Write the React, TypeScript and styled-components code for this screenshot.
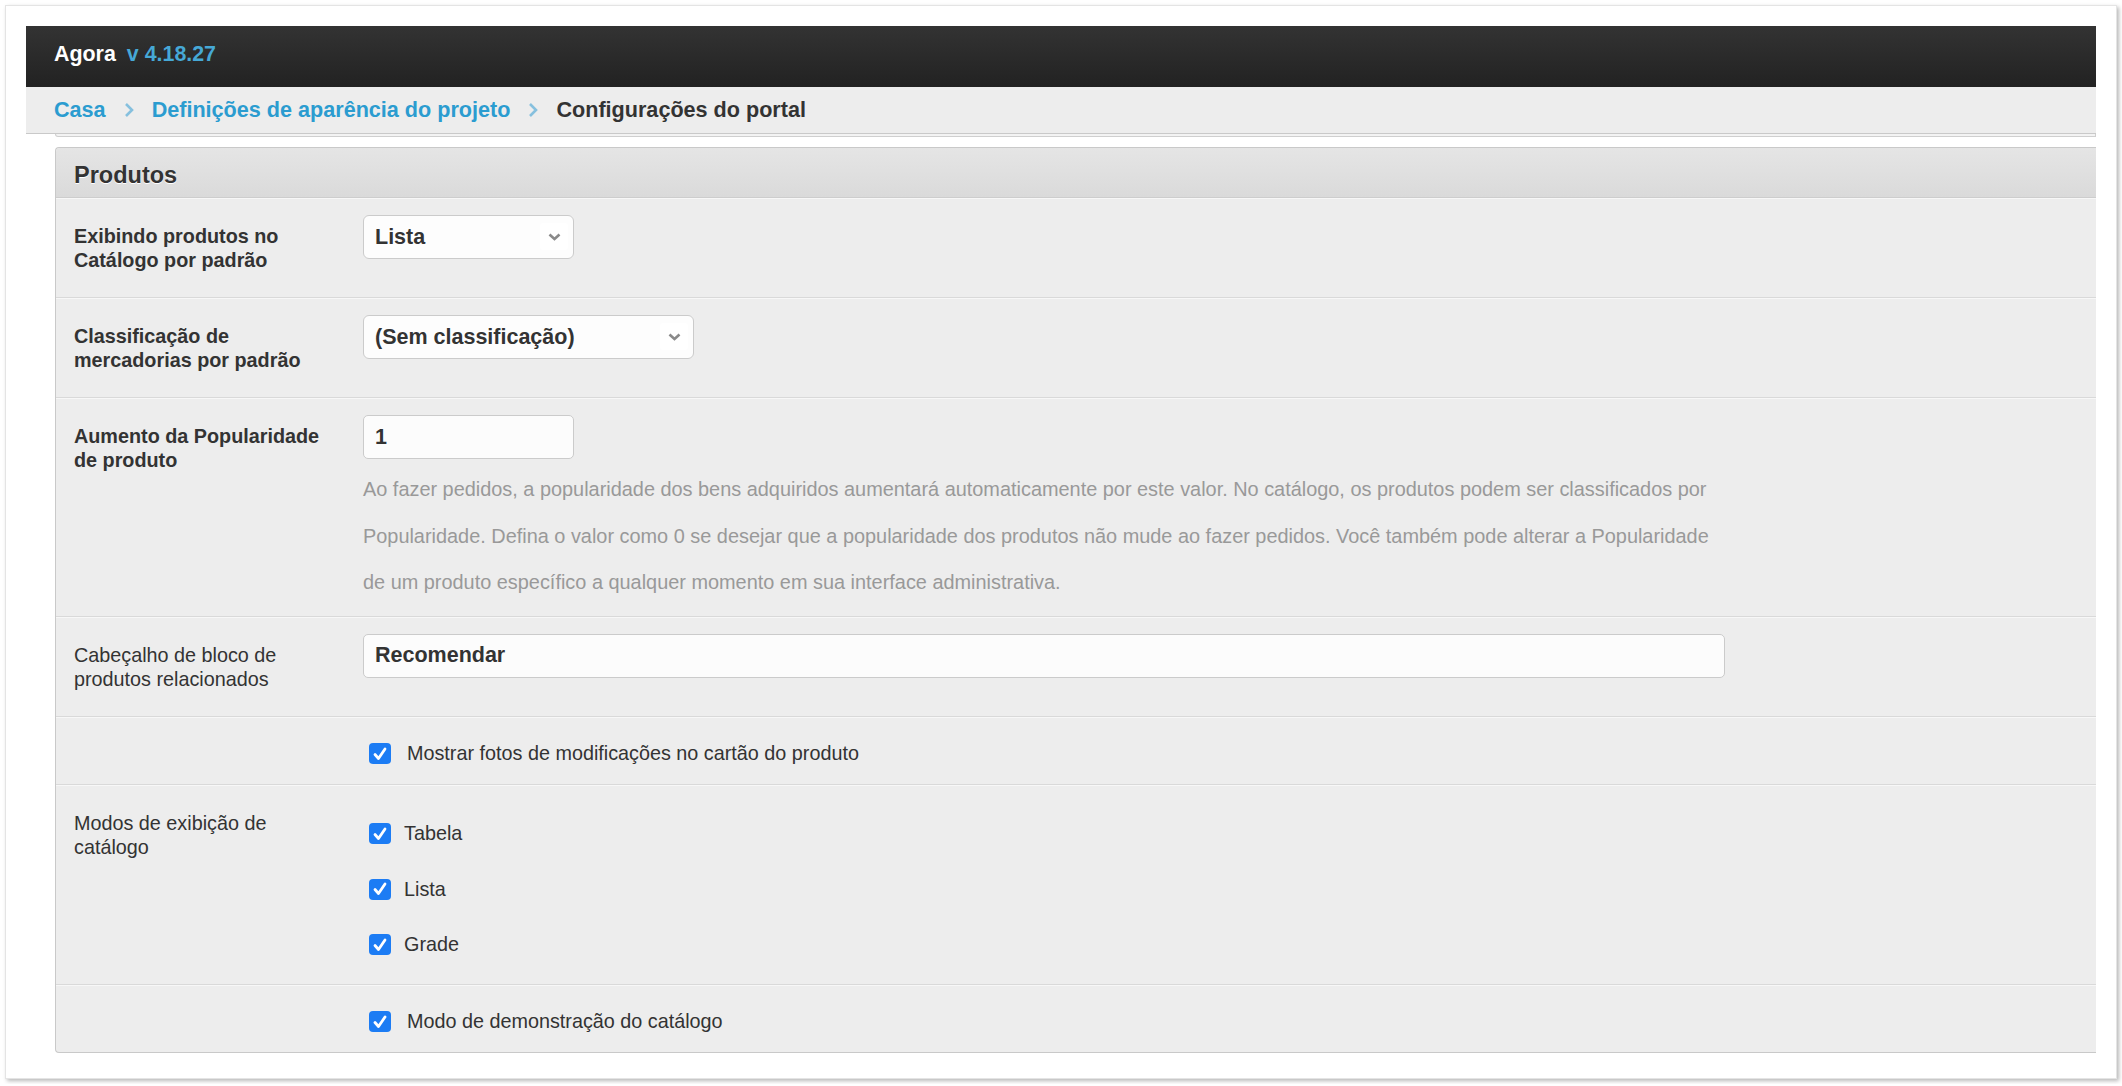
import React from "react";
import styled, { createGlobalStyle } from "styled-components";

const GlobalStyle = createGlobalStyle`
  html, body {
    margin: 0;
    background: #fff;
  }
  body {
    font-family: "Liberation Sans", Arial, Helvetica, sans-serif;
    color: #333;
  }
`;

const Frame = styled.div`
  margin: 5px;
  width: 2112px;
  box-sizing: border-box;
  padding: 20px 20px 25px;
  background: #fff;
  border: 1px solid #e4e4e4;
  box-shadow: 2px 2px 4px rgba(0, 0, 0, 0.28);
`;

const TopBar = styled.header`
  height: 61px;
  box-sizing: border-box;
  padding: 0 28px 5px;
  display: flex;
  align-items: center;
  background: linear-gradient(#333333, #222222);
  font-size: 21.4px;
  font-weight: bold;
  line-height: 24px;
  color: #fff;
`;

const Version = styled.span`
  margin-left: 11px;
  color: #46a8d6;
`;

const Crumbs = styled.nav`
  height: 47px;
  box-sizing: border-box;
  padding: 0 28px;
  display: flex;
  align-items: center;
  gap: 18px;
  background: #ededed;
  border-bottom: 1px solid #c9c9c9;
  font-size: 21.6px;
  font-weight: bold;
  line-height: 24px;
`;

const CrumbLink = styled.a`
  color: #2b9cd0;
  text-decoration: none;
`;

const CrumbCurrent = styled.span`
  color: #333;
`;

const ShelfEdge = styled.div`
  height: 3px;
  margin: 0 0 10px 29px;
  box-sizing: border-box;
  background: #f3f3f3;
  border: 1px solid #cfcfcf;
  border-top: none;
  border-radius: 0 0 0 4px;
`;

const Panel = styled.section`
  margin-left: 29px;
  background: #ededed;
  border: 1px solid #c9c9c9;
  border-right: none;
  border-radius: 4px 0 0 4px;
`;

const PanelHeader = styled.h2`
  margin: 0;
  height: 50px;
  box-sizing: border-box;
  padding: 13px 18px 0;
  background: linear-gradient(#e5e5e5, #dadada);
  border-bottom: 1px solid #cdcdcd;
  border-radius: 4px 0 0 0;
  font-size: 23.5px;
  line-height: 28px;
  color: #333;
  text-shadow: 0 1px 0 #fff;
`;

const Row = styled.div<{ $top?: number }>`
  display: grid;
  grid-template-columns: 307px 1fr;
  align-items: start;
  padding-top: ${(p) => p.$top ?? 16}px;
  border-top: 1px solid #f7f7f7;
  border-bottom: 1px solid #d9d9d9;

  &:last-child {
    border-bottom: none;
  }
`;

const Label = styled.div<{ $bold?: boolean }>`
  padding: 9px 29px 0 18px;
  font-size: 19.8px;
  line-height: 24px;
  font-weight: ${(p) => (p.$bold ? "bold" : "normal")};
  color: #333;
`;

const Control = styled.div<{ $bottom?: number }>`
  min-width: 0;
  padding-bottom: ${(p) => p.$bottom ?? 38}px;
`;

const SelectWrap = styled.div<{ $width: number }>`
  position: relative;
  width: ${(p) => p.$width}px;
`;

const Select = styled.select`
  display: block;
  appearance: none;
  width: 100%;
  height: 44px;
  box-sizing: border-box;
  padding: 0 40px 0 11px;
  background: #fdfdfd;
  border: 1px solid #cbcbcb;
  border-radius: 6px;
  font-family: inherit;
  font-size: 21.5px;
  font-weight: bold;
  color: #333;
`;

const Caret = styled.span`
  position: absolute;
  top: 8px;
  right: 6px;
  width: 28px;
  height: 27px;
  display: flex;
  align-items: center;
  justify-content: center;
  background: #fff;
  border-radius: 3px;
  pointer-events: none;
`;

const TextInput = styled.input<{ $width: number }>`
  display: block;
  width: ${(p) => p.$width}px;
  height: 44px;
  box-sizing: border-box;
  padding: 0 11px;
  background: #fcfcfc;
  border: 1px solid #cbcbcb;
  border-radius: 5px;
  font-family: inherit;
  font-size: 21.5px;
  font-weight: bold;
  color: #333;
`;

const Help = styled.p`
  margin: 7px 0 0;
  max-width: 1358px;
  font-size: 19.9px;
  line-height: 46.5px;
  color: #999;
`;

const CheckList = styled.div<{ $top?: number }>`
  display: flex;
  flex-direction: column;
  gap: 19.5px;
  padding-top: ${(p) => p.$top ?? 0}px;
`;

const CheckItem = styled.label<{ $gap?: number }>`
  display: flex;
  align-items: center;
  height: 36px;
  padding-left: 6px;
  gap: ${(p) => p.$gap ?? 16}px;
  font-size: 19.8px;
  color: #333;
`;

const Box = styled.span`
  width: 22px;
  height: 21px;
  flex: none;
  display: flex;
  align-items: center;
  justify-content: center;
  background: #1c7cf4;
  border-radius: 4px;
`;

const Chevron = () => (
  <svg width="10" height="16" viewBox="0 0 10 16">
    <polyline points="2,2 8,8 2,14" fill="none" stroke="#86c0de" strokeWidth="2.6" />
  </svg>
);

const Check = ({ label, gap }: { label: string; gap?: number }) => (
  <CheckItem $gap={gap}>
    <Box>
      <svg width="14" height="14" viewBox="0 0 14 14">
        <path d="M2 7.5 L5.5 11.5 L12 2" fill="none" stroke="#fff" strokeWidth="2.8" strokeLinecap="round" strokeLinejoin="round" />
      </svg>
    </Box>
    {label}
  </CheckItem>
);

const Dropdown = ({ value, width }: { value: string; width: number }) => (
  <SelectWrap $width={width}>
    <Select defaultValue={value}>
      <option>{value}</option>
    </Select>
    <Caret>
      <svg width="13" height="8" viewBox="0 0 13 8">
        <polyline points="1.5,1.5 6.5,6 11.5,1.5" fill="none" stroke="#8a8a8a" strokeWidth="2.6" />
      </svg>
    </Caret>
  </SelectWrap>
);

export default function App() {
  return (
    <>
      <GlobalStyle />
      <Frame>
        <TopBar>
          Agora<Version>v 4.18.27</Version>
        </TopBar>
        <Crumbs>
          <CrumbLink href="#">Casa</CrumbLink>
          <Chevron />
          <CrumbLink href="#">Definições de aparência do projeto</CrumbLink>
          <Chevron />
          <CrumbCurrent>Configurações do portal</CrumbCurrent>
        </Crumbs>
        <ShelfEdge />
        <Panel>
          <PanelHeader>Produtos</PanelHeader>

          <Row>
            <Label $bold>Exibindo produtos no Catálogo por padrão</Label>
            <Control>
              <Dropdown value="Lista" width={211} />
            </Control>
          </Row>

          <Row>
            <Label $bold>Classificação de mercadorias por padrão</Label>
            <Control>
              <Dropdown value="(Sem classificação)" width={331} />
            </Control>
          </Row>

          <Row>
            <Label $bold>Aumento da Popularidade de produto</Label>
            <Control $bottom={10}>
              <TextInput $width={211} defaultValue="1" />
              <Help>
                Ao fazer pedidos, a popularidade dos bens adquiridos aumentará automaticamente por este valor. No
                catálogo, os produtos podem ser classificados por Popularidade. Defina o valor como 0 se desejar que a
                popularidade dos produtos não mude ao fazer pedidos. Você também pode alterar a Popularidade de um
                produto específico a qualquer momento em sua interface administrativa.
              </Help>
            </Control>
          </Row>

          <Row>
            <Label>Cabeçalho de bloco de produtos relacionados</Label>
            <Control>
              <TextInput $width={1362} defaultValue="Recomendar" />
            </Control>
          </Row>

          <Row $top={18}>
            <Label />
            <Control $bottom={12}>
              <CheckList>
                <Check label="Mostrar fotos de modificações no cartão do produto" />
              </CheckList>
            </Control>
          </Row>

          <Row>
            <Label>Modos de exibição de catálogo</Label>
            <Control $bottom={21}>
              <CheckList $top={14}>
                <Check label="Tabela" gap={13} />
                <Check label="Lista" gap={13} />
                <Check label="Grade" gap={13} />
              </CheckList>
            </Control>
          </Row>

          <Row $top={18}>
            <Label />
            <Control $bottom={12}>
              <CheckList>
                <Check label="Modo de demonstração do catálogo" />
              </CheckList>
            </Control>
          </Row>
        </Panel>
      </Frame>
    </>
  );
}
